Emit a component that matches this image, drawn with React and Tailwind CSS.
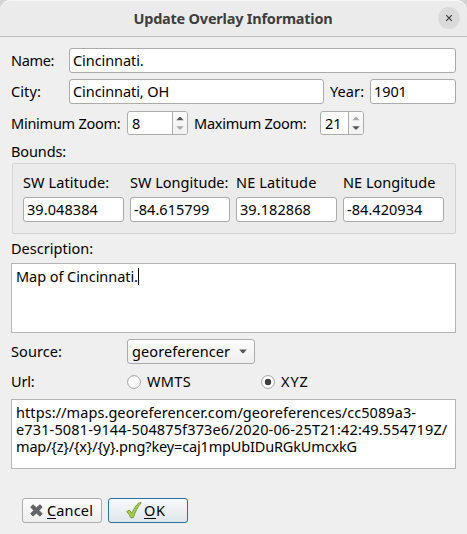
function Field({ className = "", text = "", children }) {
  return (
    <div className={`flex h-[25px] items-center rounded-[3px] border border-[#ababab] bg-white pl-[3px] ${className}`}>
      <span className={text}>{children}</span>
    </div>
  );
}

function Spin({ className = "", stepper = "", text = "", value, up, down }) {
  return (
    <div className={`flex h-6 overflow-hidden rounded-[3px] border border-[#ababab] bg-white ${className}`}>
      <span className={`flex-1 self-center pl-[4px] ${text}`}>{value}</span>
      <div className={`flex items-center justify-center border-l border-[#ababab] bg-gradient-to-b from-[#fbfbfb] to-[#f1f1f1] ${stepper}`}>
        <svg width="8" height="14" viewBox="0 0 8 14">
          <path d="M0.3 4.2 3.4 1h1.2L7.7 4.2z" fill={up} />
          <path d="M0.3 10.2 3.4 13.4h1.2L7.7 10.2z" fill={down} />
        </svg>
      </div>
    </div>
  );
}

function Radio({ checked }) {
  return (
    <svg width="14" height="14" viewBox="0 0 14 14" className="shrink-0">
      <circle cx="7" cy="7" r="6.4" fill="#fff" stroke="#a2a2a2" />
      {checked && <circle cx="7" cy="7" r="3.2" fill="#3f3f3f" />}
    </svg>
  );
}

function Bound({ className, label, labelClass, value, valueClass }) {
  return (
    <div className={className}>
      <div className={`mb-[6px] ${labelClass}`}>{label}</div>
      <Field text={valueClass}>{value}</Field>
    </div>
  );
}

function Mnemonic({ first, rest }) {
  return (
    <>
      <span className="inline-block h-[17px] border-b border-black">{first}</span>
      {rest}
    </>
  );
}

export default function App() {
  return (
    <div className="h-[534px] w-[467px] overflow-hidden bg-[#d5d5d5] font-['Noto_Sans',sans-serif] text-[14.5px] leading-[17px] whitespace-nowrap text-black">
      <div className="h-full rounded-t-[11px] bg-[#efefef]">
        <header className="relative flex h-[37px] items-center justify-center rounded-t-[11px] border-b border-[#bdbdbd] bg-[#ebebeb] shadow-[inset_0_1px_0_#f8f8f8]">
          <h1 className="pt-px pr-px text-[14.5px] font-bold tracking-[-0.22px] text-[#3d3d3d]">Update Overlay Information</h1>
          <button className="absolute top-[7px] right-[7px] flex size-[22px] items-center justify-center rounded-full bg-[#dadada]">
            <svg width="8" height="8" viewBox="0 0 8 8" stroke="#3d3d3d" strokeWidth="1.2">
              <path d="M1.2 1.2 6.8 6.8M6.8 1.2 1.2 6.8" />
            </svg>
          </button>
        </header>

        <main className="pt-[11px] pr-[11px] pl-[11px]">
          <div className="flex items-center">
            <span className="w-[58px] tracking-[-0.36px]">Name:</span>
            <Field className="flex-1" text="tracking-[-0.08px]">Cincinnati.</Field>
          </div>

          <div className="mt-[6px] flex items-center">
            <span className="w-[58px] tracking-[0.1px]">City:</span>
            <Field className="w-[255px]" text="tracking-[-0.08px]">Cincinnati, OH</Field>
            <span className="w-[46px] pl-[6px] tracking-[0.1px]">Year:</span>
            <Field className="w-[86px]" text="tracking-[-0.1px]">1901</Field>
          </div>

          <div className="mt-[7px] flex items-center">
            <span className="w-[116px] tracking-[-0.25px]">Minimum Zoom:</span>
            <Spin className="w-[61px]" stepper="w-[15px]" value="8" up="#555" down="#a9a9a9" />
            <span className="w-[132px] pl-[6px] tracking-[-0.26px]">Maximum Zoom:</span>
            <Spin className="w-[44px]" stepper="w-[15px]" value="21" up="#a9a9a9" down="#555" />
          </div>

          <div className="mt-[8px] tracking-[-0.12px]">Bounds:</div>
          <div className="mt-[3px] ml-px flex h-[71px] gap-[6px] rounded-[2px] border border-[#d3d3d3] bg-[#ebebeb] pt-[10px] pl-[10px]">
            <Bound className="w-[101px]" label="SW Latitude:" labelClass="tracking-[0.1px]" value="39.048384" valueClass="tracking-[0.08px]" />
            <Bound className="w-[100px]" label="SW Longitude:" labelClass="tracking-[0px]" value="-84.615799" valueClass="tracking-[0.05px]" />
            <Bound className="w-[101px]" label="NE Latitude" labelClass="tracking-[0.15px]" value="39.182868" valueClass="tracking-[0.08px]" />
            <Bound className="w-[101px]" label="NE Longitude" labelClass="tracking-[0.03px]" value="-84.420934" valueClass="tracking-[0.05px]" />
          </div>

          <div className="mt-[6px] tracking-[0.02px]">Description:</div>
          <div className="mt-[6px] flex h-[70px] items-start border border-[#b4b4b4] bg-white pt-[4px] pl-[4px]">
            <span className="tracking-[-0.06px]">Map of Cincinnati.</span>
            <span className="h-[17px] w-px bg-black" />
          </div>

          <div className="mt-[6px] flex items-center">
            <span className="w-[116px] tracking-[0.08px]">Source:</span>
            <div className="flex h-[25px] w-[128px] items-center justify-between rounded-[3px] border border-[#ababab] bg-gradient-to-b from-[#fdfdfd] to-[#eeeeee] pr-[7px] pl-[4px]">
              <span className="tracking-[0.1px]">georeferencer</span>
              <svg width="8" height="5" viewBox="0 0 8 5">
                <path d="M0.3 0.5 3.4 4.2h1.2L7.7 0.5z" fill="#555" />
              </svg>
            </div>
          </div>

          <div className="mt-[9px] flex items-center">
            <span className="w-[116px] tracking-[-0.18px]">Url:</span>
            <div className="flex w-[134px] items-center gap-[6px]">
              <Radio />
              <span className="tracking-[0.35px]">WMTS</span>
            </div>
            <div className="flex items-center gap-[6px]">
              <Radio checked />
              <span className="tracking-[0.9px]">XYZ</span>
            </div>
          </div>

          <div className="mt-[9px] h-[70px] border border-[#b4b4b4] bg-white pt-[4px] pl-[4px]">
            <div className="tracking-[0.075px]">https://maps.georeferencer.com/georeferences/cc5089a3-</div>
            <div className="tracking-[0.14px]">e731-5081-9144-504875f373e6/2020-06-25T21:42:49.554719Z/</div>
            <div className="tracking-[-0.16px]">{"map/{z}/{x}/{y}.png?key=caj1mpUbIDuRGkUmcxkG"}</div>
          </div>

          <div className="mt-[29px] ml-[11px] flex gap-[6px]">
            <button className="flex h-[25px] w-[80px] items-center rounded-[3px] border border-[#ababab] bg-gradient-to-b from-[#fdfdfd] to-[#eeeeee] pl-[7px]">
              <svg width="13" height="13" viewBox="0 0 13 13" className="mr-[4px]">
                <path d="M3 .8 6.4 3.800 9.900.8 12.200 3 9 6.400l3.200 3.300-2.300 2.400-3.500-3-3.400 3L.7 9.700 3.800 6.400.7 3z" fill="#666" stroke="#4c4c4c" strokeWidth=".8" strokeLinejoin="round" />
              </svg>
              <span className="tracking-[0.15px]"><Mnemonic first="C" rest="ancel" /></span>
            </button>
            <button className="flex h-[25px] w-[80px] items-center rounded-[3px] border border-[#2b6f9f] bg-gradient-to-b from-[#f8fafb] to-[#dfe6eb] pl-[17px]">
              <svg width="16" height="17" viewBox="0 0 16 17" className="mr-[2px]">
                <path d="M.8 9.600 3.300 8l2.600 3.300C7.400 7.200 10 3 13 .8h2.200C11.800 4.600 9 10.200 7.400 15.500l-2.400.500C3.900 13.500 2.500 11.400.8 9.600z" fill="#a5cf45" stroke="#6f9440" strokeWidth=".9" strokeLinejoin="round" />
              </svg>
              <span className="tracking-[0.6px]"><Mnemonic first="O" rest="K" /></span>
            </button>
          </div>
        </main>
      </div>
    </div>
  );
}
